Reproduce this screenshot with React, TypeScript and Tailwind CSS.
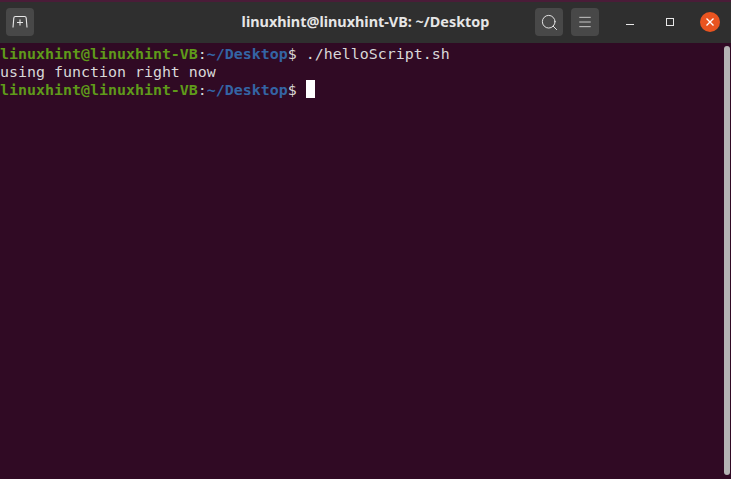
import { Menu, Search } from "lucide-react";

const GREEN = "text-[#5f9a1a]";
const BLUE = "text-[#3465a4]";

function Prompt({ children }: { children?: React.ReactNode }) {
  return (
    <div className="h-[18px] whitespace-pre">
      <span className={`${GREEN} font-bold`}>linuxhint@linuxhint-VB</span>
      <span>:</span>
      <span className={`${BLUE} font-bold`}>~/Desktop</span>
      <span>$ </span>
      {children}
    </div>
  );
}

function HeaderButton({ children }: { children: React.ReactNode }) {
  return (
    <div className="w-[28px] h-[28px] rounded-[4px] bg-[#484848] flex items-center justify-center text-[#e8e8e8]">
      {children}
    </div>
  );
}

export default function App() {
  return (
    <div className="w-[731px] h-[479px] overflow-hidden flex flex-col bg-[#300a24]">
      <div className="h-[2px] bg-[#4a1c38]" />
      <header className="h-[41px] pb-[1px] bg-[#2f2f2f] grid grid-cols-[1fr_auto_1fr] items-center pl-[6px] pr-[11px] font-['Noto_Sans',sans-serif]">
        <div className="flex">
          <HeaderButton>
            <svg width="16" height="14" viewBox="0 0 16 14" fill="none" stroke="currentColor" strokeWidth="1.1">
              <path d="M1 12.5 L1.8 3 Q1.9 1.5 3.4 1.5 H12.6 Q14.1 1.5 14.2 3 L15 12.5" />
              <path d="M8 4.5 V10.5 M5 7.5 H11" />
            </svg>
          </HeaderButton>
        </div>
        <div className="ml-[5px] text-[14.4px] font-bold text-[#e6e6e6] whitespace-nowrap">
          linuxhint@linuxhint-VB: ~/Desktop
        </div>
        <div className="flex items-center justify-end">
          <div className="flex items-center gap-[8px]">
            <HeaderButton>
              <Search size={19} strokeWidth={1.2} />
            </HeaderButton>
            <HeaderButton>
              <Menu size={16} strokeWidth={1.2} />
            </HeaderButton>
          </div>
          <div className="ml-[27px] w-[8px] h-[1px] bg-[#e8e8e8] mt-[4px]" />
          <div className="ml-[32px] w-[8px] h-[8px] border border-[#e8e8e8]" />
          <div className="ml-[26px] w-[20px] h-[20px] rounded-full bg-[#e95420] flex items-center justify-center">
            <svg width="10" height="10" viewBox="0 0 10 10" stroke="#fff" strokeWidth="1.4">
              <path d="M1.5 1.5 L8.5 8.5 M8.5 1.5 L1.5 8.5" />
            </svg>
          </div>
        </div>
      </header>
      <main className="flex-1 flex min-h-0">
        <div className="flex-1 pt-[2px] text-[14.95px] leading-[18px] text-[#d8d8d8] font-['DejaVu_Sans_Mono',monospace]">
          <Prompt>./helloScript.sh</Prompt>
          <div className="h-[18px] whitespace-pre">using function right now</div>
          <Prompt>
            <span className="inline-block w-[9px] h-[18px] -mt-[1px] bg-white align-top" />
          </Prompt>
        </div>
        <div className="w-[6px] mr-[1px] mt-[3px] mb-[4px] rounded-full bg-[#b4b4b4]" />
      </main>
    </div>
  );
}
